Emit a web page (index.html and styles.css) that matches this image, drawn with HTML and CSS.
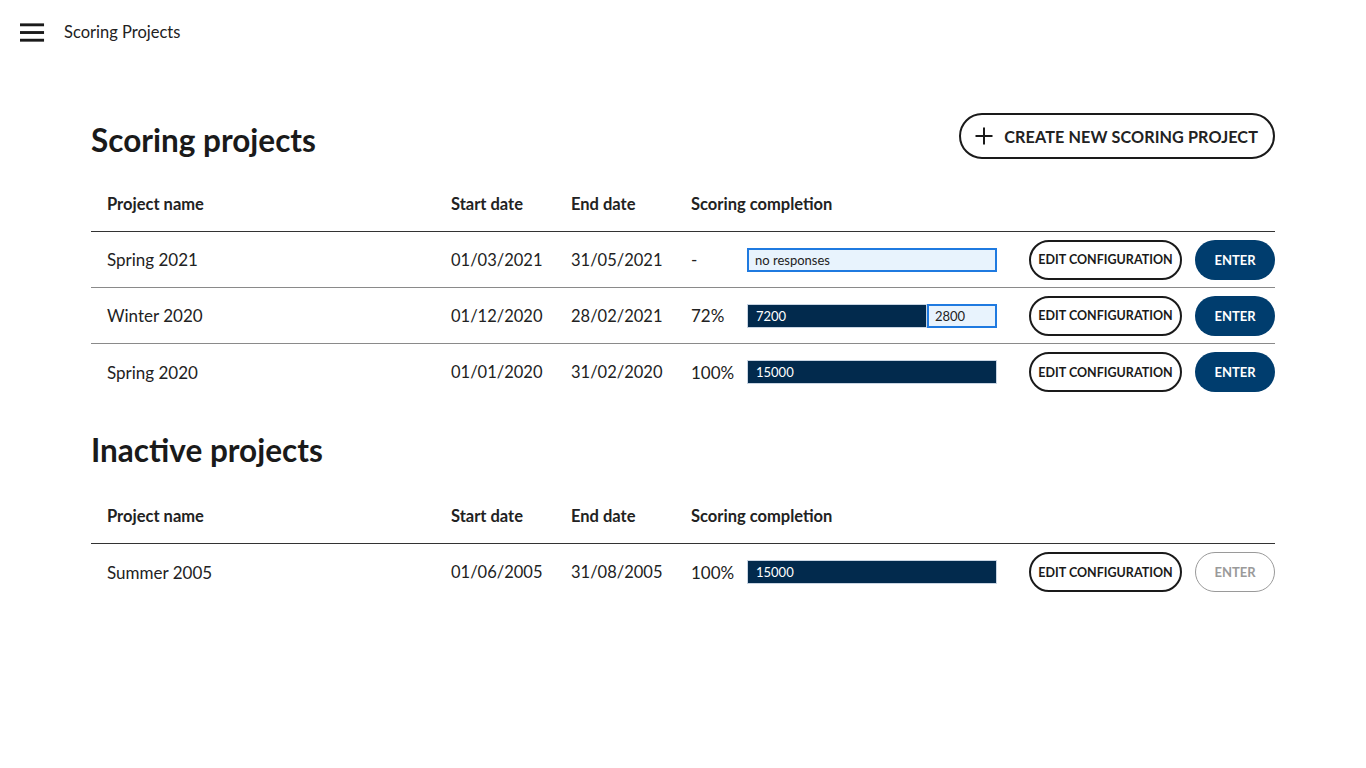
FILE: index.html
```html
<!DOCTYPE html>
<html lang="en">
<head>
<meta charset="utf-8">
<title>Scoring Projects</title>
<link rel="stylesheet" href="styles.css">
</head>
<body>
<header class="topbar">
  <button class="menu" aria-label="Menu">
    <svg width="26" height="20" viewBox="0 0 26 20"><rect x="0" y="0" width="25" height="3" fill="#1a1a1a"/><rect x="0" y="8" width="25" height="3" fill="#1a1a1a"/><rect x="0" y="16" width="25" height="3" fill="#1a1a1a"/></svg>
  </button>
  <span class="app-title">Scoring Projects</span>
</header>
<main class="content">
  <section class="section">
    <div class="section-head">
      <h1 class="title">Scoring projects</h1>
      <button class="btn-create">
        <svg width="18" height="18" viewBox="0 0 18 18"><path d="M9 0.5V17.5M0.5 9H17.5" stroke="#1a1a1a" stroke-width="2"/></svg>
        <span>CREATE NEW SCORING PROJECT</span>
      </button>
    </div>
    <div class="table">
      <div class="row head">
        <div class="c-name">Project name</div>
        <div class="c-date">Start date</div>
        <div class="c-date">End date</div>
        <div class="c-comp">Scoring completion</div>
      </div>
      <div class="row">
        <div class="c-name">Spring 2021</div>
        <div class="c-date num">01/03/2021</div>
        <div class="c-date num">31/05/2021</div>
        <div class="c-pct">-</div>
        <div class="bar"><div class="seg rest" style="width:100%">no responses</div></div>
        <div class="actions"><button class="btn-edit">EDIT CONFIGURATION</button><button class="btn-enter">ENTER</button></div>
      </div>
      <div class="row">
        <div class="c-name">Winter 2020</div>
        <div class="c-date num">01/12/2020</div>
        <div class="c-date num">28/02/2021</div>
        <div class="c-pct">72%</div>
        <div class="bar"><div class="seg done" style="width:72%">7200</div><div class="seg rest" style="width:28%">2800</div></div>
        <div class="actions"><button class="btn-edit">EDIT CONFIGURATION</button><button class="btn-enter">ENTER</button></div>
      </div>
      <div class="row last">
        <div class="c-name">Spring 2020</div>
        <div class="c-date num">01/01/2020</div>
        <div class="c-date num">31/02/2020</div>
        <div class="c-pct">100%</div>
        <div class="bar"><div class="seg done" style="width:100%">15000</div></div>
        <div class="actions"><button class="btn-edit">EDIT CONFIGURATION</button><button class="btn-enter">ENTER</button></div>
      </div>
    </div>
  </section>
  <section class="section inactive">
    <div class="section-head">
      <h1 class="title">Inactive projects</h1>
    </div>
    <div class="table">
      <div class="row head">
        <div class="c-name">Project name</div>
        <div class="c-date">Start date</div>
        <div class="c-date">End date</div>
        <div class="c-comp">Scoring completion</div>
      </div>
      <div class="row last">
        <div class="c-name">Summer 2005</div>
        <div class="c-date num">01/06/2005</div>
        <div class="c-date num">31/08/2005</div>
        <div class="c-pct">100%</div>
        <div class="bar"><div class="seg done" style="width:100%">15000</div></div>
        <div class="actions"><button class="btn-edit">EDIT CONFIGURATION</button><button class="btn-enter disabled">ENTER</button></div>
      </div>
    </div>
  </section>
</main>
</body>
</html>
```
FILE: styles.css
```css
* { box-sizing: border-box; }
body {
  margin: 0;
  font-family: "Lato", "Noto Sans", sans-serif;
  color: #1a1a1a;
  background: #fff;
}
button { font-family: inherit; cursor: pointer; }
.topbar {
  height: 64px;
  display: flex;
  align-items: center;
  padding-left: 20px;
}
.menu {
  border: 0;
  background: none;
  padding: 0;
  width: 25px;
  height: 20px;
  display: flex;
  margin-top: 2px;
}
.app-title {
  margin-left: 19px;
  font-size: 16.5px;
  color: #222;
}
.content {
  padding: 49px 91px 0 91px;
}
.section-head {
  display: flex;
  align-items: center;
  justify-content: space-between;
  height: 46px;
}
.title {
  margin: 0;
  font-size: 31.5px;
  font-weight: 700;
  line-height: 46px;
  padding-top: 8px;
  color: #1a1a1a;
}
.inactive .title { padding-top: 0; margin-top: -3px; }
.btn-create {
  height: 46px;
  border: 2px solid #1a1a1a;
  border-radius: 23px;
  background: #fff;
  display: flex;
  align-items: center;
  gap: 11px;
  padding: 0 15px 0 14px;
  font-size: 16.2px;
  font-weight: 700;
  color: #222;
  letter-spacing: 0.1px;
}
.table {
  margin-top: 17px;
}
.row {
  display: flex;
  align-items: center;
  height: 56px;
  padding-left: 16px;
  border-bottom: 1px solid #8a8a8a;
  font-size: 17px;
  color: #222;
}
.row.last { border-bottom: 0; }
.row.head {
  font-weight: 700;
  font-size: 16.5px;
  border-bottom: 1px solid #333;
}
.c-name { width: 344px; }
.c-date { width: 120px; }
.num { font-size: 16.5px; }
.c-pct { width: 56px; }
.bar {
  width: 250px;
  height: 24px;
  display: flex;
  font-size: 13px;
}
.seg {
  height: 24px;
  display: flex;
  align-items: center;
  padding-left: 8px;
}
.seg.done {
  background: #022a4d;
  color: #fff;
  border: 1px solid #c8d4e2;
}
.seg.rest {
  background: #e8f3fd;
  color: #222;
  border: 2px solid #1f7ae0;
  padding-left: 6px;
}
.actions {
  margin-left: auto;
  display: flex;
  gap: 13px;
}
.btn-edit {
  width: 153px;
  height: 40px;
  border: 2px solid #1a1a1a;
  border-radius: 20px;
  background: #fff;
  font-size: 12.5px;
  font-weight: 700;
  color: #1a1a1a;
  padding: 0;
}
.btn-enter {
  width: 80px;
  height: 40px;
  border: 0;
  border-radius: 20px;
  background: #003d6e;
  color: #fff;
  font-size: 13px;
  font-weight: 700;
  padding: 0;
}
.btn-enter.disabled {
  background: #fff;
  border: 1px solid #9a9a9a;
  color: #9a9a9a;
}
.inactive {
  margin-top: 28px;
}
.inactive .table { margin-top: 14px; }
```
